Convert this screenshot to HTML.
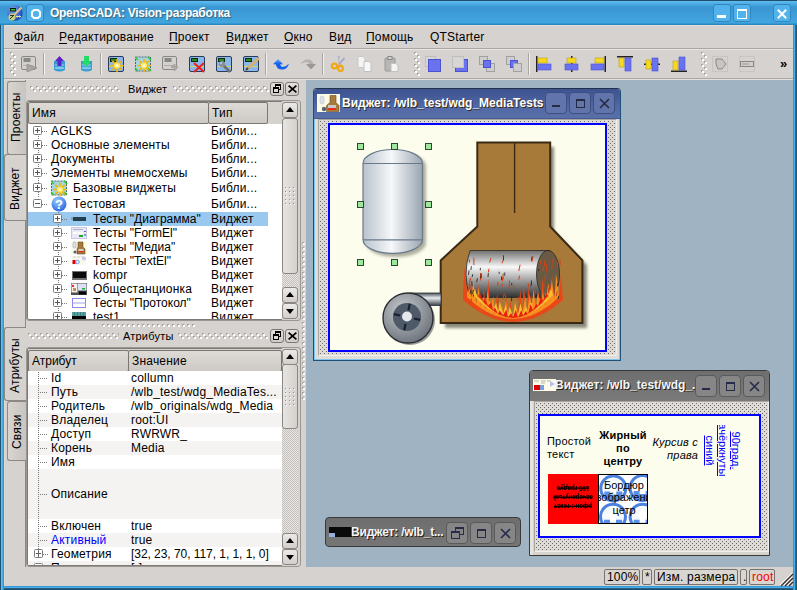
<!DOCTYPE html>
<html><head><meta charset="utf-8">
<style>
*{box-sizing:border-box;margin:0;padding:0}
html,body{width:797px;height:590px;overflow:hidden;background:#d6d2ce;font-family:"Liberation Sans",sans-serif;font-size:12px;color:#000;position:relative;letter-spacing:0.2px}
.a{position:absolute}
.nw{white-space:nowrap}
svg{position:absolute;overflow:visible}
#win{position:absolute;left:0;top:0;width:797px;height:590px;background:linear-gradient(90deg,#1e5270 0 1px,#5ebcf6 1px 2px,#48ace4 2px 3px,#3a96cc 3px 4px,transparent 4px 793px,#3a98d8 793px 794px,#48aee8 794px 795px,#2a6a90 795px 796px,#225a7a 796px),linear-gradient(#3ea6e6 0 586px,#3a98d8 586px 587px,#48aef0 587px 588px,#285e80 588px 589px,#1e4e6a 589px)}
#title{position:absolute;left:0;top:0;width:797px;height:25px;background:linear-gradient(#1e4e6a 0,#1e4e6a 1px,#5ebdf5 1px,#3a96d0 7px,#3d9ad6 12px,#41a6e0 23px,#2a8ac0 24px,#2a8ac0 25px)}
#content{position:absolute;left:4px;top:25px;width:789px;height:561px;background:#d6d2cf;border-top:1px solid #e4dcd8;border-left:1px solid #e0d6d2}
.tb{position:absolute;top:4px;width:19px;height:18px;border-radius:3px;background:#52b3ec;border:1px solid #3186bd}
.menu{position:absolute;top:30px;white-space:nowrap}
.menu u{text-decoration:none;position:relative}.menu u:after{content:"";position:absolute;left:0;right:0;top:13px;height:1px;background:#000}
.sep{position:absolute;top:53px;width:2px;height:22px;border-left:1px solid #a8a4a0;border-right:1px solid #f4f2f0}
.hdl{position:absolute;width:6px;background-image:conic-gradient(from 270deg at 2px 2px,#fff 90deg,transparent 0),conic-gradient(from 270deg at 2px 2px,#fff 90deg,transparent 0),conic-gradient(from 270deg at 2px 2px,#a8a4a0 90deg,transparent 0),conic-gradient(from 270deg at 2px 2px,#a8a4a0 90deg,transparent 0);background-size:6px 6px;background-position:1px 1px,4px 4px,0 0,3px 3px}
#mdi{position:absolute;left:306px;top:80px;width:487px;height:487px;background:#9fb3c3}
.sb{position:absolute;top:569px;height:16px;border:1px solid #76726e;border-radius:2px;line-height:14px;padding-left:2px;white-space:nowrap;background:#d9d5d1}

.dots{position:absolute;height:6px;background-image:conic-gradient(from 270deg at 2px 2px,#fff 90deg,transparent 0),conic-gradient(from 270deg at 2px 2px,#fff 90deg,transparent 0),conic-gradient(from 270deg at 2px 2px,#a8a4a0 90deg,transparent 0),conic-gradient(from 270deg at 2px 2px,#a8a4a0 90deg,transparent 0);background-size:6px 6px;background-position:1px 1px,4px 4px,0 0,3px 3px}
.hdots{position:absolute;height:3px;background-image:conic-gradient(from 270deg at 2px 2px,#fff 90deg,transparent 0),conic-gradient(from 270deg at 2px 2px,#a8a4a0 90deg,transparent 0);background-size:5px 5px;background-position:1px 1px,0 0}
.vdots{position:absolute;width:3px;background-image:conic-gradient(from 270deg at 2px 2px,#fff 90deg,transparent 0),conic-gradient(from 270deg at 2px 2px,#a8a4a0 90deg,transparent 0);background-size:5px 5px;background-position:1px 1px,0 0}
.dbtn{position:absolute;width:14px;height:14px;border:1px solid #7c7874;border-radius:3px;background:linear-gradient(#e2dfdc,#d0ccc8)}
.frame{position:absolute;border:1px solid #9a9692;border-radius:3px;background:#d6d2ce}
.frame2{position:absolute;border:1px solid #7e7a76;border-radius:2px;background:#fff;overflow:hidden}
.hd{position:absolute;top:0;height:22px;border:1px solid #7a7672;border-radius:2px;background:linear-gradient(#dedad6,#cdc9c5);line-height:20px;padding-left:3px;white-space:nowrap}
.row{position:absolute;height:14px;line-height:14px;white-space:nowrap}
.pb{position:absolute;width:9px;height:9px;border:1px solid #7c7c7c;border-radius:1.5px;background:#fff}
.pb:before{content:"";position:absolute;left:1px;top:3px;width:5px;height:1px;background:#555}
.pb.p:after{content:"";position:absolute;left:3px;top:1px;width:1px;height:5px;background:#555}
.vl{position:absolute;width:1px;background:repeating-linear-gradient(#7a7a7a 0 1px,transparent 1px 2px)}
.hl{position:absolute;height:1px;background:repeating-linear-gradient(90deg,#7a7a7a 0 1px,transparent 1px 2px)}
.sbar{position:absolute;width:16px;background:conic-gradient(#c4c0bc 25%,#e8e6e4 0 50%,#c4c0bc 0 75%,#e8e6e4 0);background-size:2px 2px}
.sbtn{position:absolute;left:0;width:16px;height:16px;border:1px solid #8a8682;border-radius:3px;background:linear-gradient(#eceae8,#d2cecb)}
.sbtn.up:after{content:"";position:absolute;left:3px;top:4px;border-left:4px solid transparent;border-right:4px solid transparent;border-bottom:5px solid #000}
.sbtn.dn:after{content:"";position:absolute;left:3px;top:5px;border-left:4px solid transparent;border-right:4px solid transparent;border-top:5px solid #000}
.slider{position:absolute;left:0;width:16px;border:1px solid #8a8682;border-radius:3px;background:linear-gradient(90deg,#e6e4e2,#d4d0cc)}
.grip{position:absolute;left:2px;width:10px;height:18px;background-image:conic-gradient(from 270deg at 1px 1px,#fff 90deg,transparent 0),conic-gradient(from 270deg at 1px 1px,#98948f 90deg,transparent 0);background-size:4px 4px;background-position:1px 1px,0 0}
.vtab{position:absolute;border:1px solid #8c8884;border-right:none;border-radius:3px 0 0 3px;background:linear-gradient(90deg,#d8d4d0,#c8c4c0)}
.vtab span{position:absolute;white-space:nowrap;transform:rotate(-90deg);transform-origin:0 0}

.mw{position:absolute;border:1px solid #28344e;border-radius:4px 4px 0 0;overflow:hidden}
.mwt{position:absolute;left:0;top:0;right:0}
.mbtn{position:absolute;width:22px;height:22px;border:1px solid #3a4a78;border-radius:4px;background:#6678ad}
.pat{position:absolute;background-color:#dedad6;background-image:conic-gradient(from 270deg at 1px 1px,#6e6a68 90deg,transparent 0),conic-gradient(from 270deg at 1px 1px,#6e6a68 90deg,transparent 0);background-size:4px 4px;background-position:1px 1px,3px 3px;border:1px solid #a8a4a0;border-right-color:#f0eeec;border-bottom-color:#f0eeec}
.hnd{position:absolute;width:7px;height:7px;background:#9ce89c;border:1px solid #2a4a2a}
</style></head><body>
<div id="win"></div>
<div id="title"></div>
<!-- title bar -->
<svg style="left:7px;top:5px" width="17" height="16" viewBox="0 0 17 16"><defs><radialGradient id="ag" cx=".35" cy=".3" r=".75"><stop offset="0" stop-color="#7aa8f0"/><stop offset="1" stop-color="#1a40b0"/></radialGradient></defs>
<circle cx="8" cy="8" r="7.7" fill="url(#ag)"/>
<rect x="3" y="3" width="6" height="3.5" fill="#111"/><rect x="3.8" y="4" width="4.4" height="1.5" fill="#2c2"/>
<line x1="7" y1="10" x2="14.5" y2="2.5" stroke="#e8c090" stroke-width="1.8"/>
<circle cx="5" cy="12" r="3.6" fill="#c0d080"/><path d="M3 14L7 10M3 10.5h4" stroke="#223" stroke-width=".9"/>
<path d="M9 11.5h5M10 10.5v2M12.5 10.5v2" stroke="#e0e0a0" stroke-width="1"/>
</svg>
<div class="tb" style="left:26px;width:18px"><svg style="left:3.5px;top:3.5px" width="10" height="10"><path d="M3 1H7L9 3V7L7 9H3L1 7V3Z" fill="none" stroke="#fff" stroke-width="2"/></svg></div>
<div class="a nw" style="left:50px;top:6px;font-weight:bold;color:#fff;letter-spacing:-0.27px;text-shadow:1px 1px 1px rgba(60,40,20,.5)">OpenSCADA: Vision-разработка</div>
<div class="tb" style="left:713px;width:18px"><div class="a" style="left:3px;top:10px;width:9px;height:3px;background:#fff"></div></div>
<div class="tb" style="left:733px;width:18px"><div class="a" style="left:3px;top:4px;width:10px;height:10px;border:1px solid #fff;border-top-width:2px"></div></div>
<div class="tb" style="left:773px;width:18px"><svg style="left:3px;top:4px" width="10" height="10"><path d="M0.8 0.8L9.2 9.2M9.2 0.8L0.8 9.2" stroke="#fff" stroke-width="2"/></svg></div>
<div id="content"></div>
<!-- menu -->
<div class="menu" style="left:14px"><u>Ф</u>айл</div>
<div class="menu" style="left:59px"><u>Р</u>едактирование</div>
<div class="menu" style="left:169px"><u>П</u>роект</div>
<div class="menu" style="left:226px"><u>В</u>иджет</div>
<div class="menu" style="left:284px"><u>О</u>кно</div>
<div class="menu" style="left:329px">В<u>и</u>д</div>
<div class="menu" style="left:366px"><u>П</u>омощь</div>
<div class="menu" style="left:430px">QTStarter</div>
<div class="a" style="left:4px;top:48px;width:789px;height:1px;background:#aaa6a2"></div>
<div class="a" style="left:4px;top:49px;width:789px;height:1px;background:#e8e6e4"></div>
<div class="a" style="left:4px;top:78px;width:789px;height:1px;background:#aaa6a2"></div><div class="a" style="left:4px;top:79px;width:789px;height:1px;background:#e4e0dc"></div>
<!-- toolbar -->
<div class="hdl" style="left:10px;top:52px;height:24px"></div>
<div class="sep" style="left:43px"></div>
<div class="sep" style="left:100px"></div>
<div class="sep" style="left:265px"></div>
<div class="sep" style="left:322px"></div>
<div class="hdl" style="left:414px;top:52px;height:24px"></div>
<div class="sep" style="left:528px"></div>
<div class="hdl" style="left:701px;top:52px;height:24px"></div>
<div class="a" style="left:780px;top:56px;font-weight:bold;font-size:13px">»</div>
<svg style="left:21px;top:56px" width="16" height="16" viewBox="0 0 16 16"><rect x="0.5" y="0.5" width="14" height="13" rx="1.5" fill="#d4d0cc" stroke="#8a8886"/><rect x="2.5" y="2" width="7" height="4" fill="#888"/><rect x="2" y="9" width="10" height="1" fill="#b0aeac"/><path d="M6 8L16 12L6 16Z" fill="#a8a6a4" stroke="#8a8886" stroke-width=".6"/></svg>
<svg style="left:53px;top:56px" width="16" height="16" viewBox="0 0 16 16"><path d="M1 5 h11 v9 q-5.5 3 -11 0Z" fill="#3a9ad0"/><ellipse cx="6.5" cy="12" rx="5" ry="1.3" fill="#7cc8ec"/><ellipse cx="6.5" cy="9" rx="5" ry="1.3" fill="#6ab8e0"/><path d="M6.5 0L11 5H8.5V10H4.5V5H2Z" fill="#5a22cc"/></svg>
<svg style="left:80px;top:56px" width="16" height="16" viewBox="0 0 16 16"><path d="M1 5 h11 v9 q-5.5 3 -11 0Z" fill="#3a9ad0"/><ellipse cx="6.5" cy="12" rx="5" ry="1.3" fill="#7cc8ec"/><ellipse cx="6.5" cy="9" rx="5" ry="1.3" fill="#6ab8e0"/><path d="M6.5 10.5L11 5.5H9V0H4V5.5H1.5Z" fill="#22dd66"/></svg>
<svg style="left:108px;top:56px" width="16" height="16" viewBox="0 0 16 16"><rect x="0.5" y="0.5" width="15" height="15" rx="1.5" fill="#8ab8ec" stroke="#2a3a58"/><rect x="2" y="2" width="7" height="4" fill="#0a2a0a"/><rect x="3" y="3" width="5" height="2" fill="#2a8a2a"/><rect x="1" y="10" width="14" height="1" fill="#d8d860"/><g stroke="#f4b400" stroke-width="1.7" stroke-linecap="round"><path d="M9 3.5V15.5M3 9.5H15M4.8 5.3L13.2 13.7M13.2 5.3L4.8 13.7"/></g><circle cx="9" cy="9.5" r="3" fill="#ffe860"/><circle cx="9" cy="9.5" r="1.6" fill="#fffbd0"/></svg>
<svg style="left:135px;top:56px" width="16" height="16" viewBox="0 0 16 16"><rect x="0.5" y="1" width="15" height="14" fill="#a8d4dc" stroke="#4a6a70" stroke-dasharray="2 1"/><path d="M0 1l3 3M13 1l3 3M0 12l3 3M13 12l3 3" stroke="#22cc22" stroke-width="1.2"/><g stroke="#f4b400" stroke-width="1.7" stroke-linecap="round"><path d="M9 3.5V15.5M3 9.5H15M4.8 5.3L13.2 13.7M13.2 5.3L4.8 13.7"/></g><circle cx="9" cy="9.5" r="3" fill="#ffe860"/><circle cx="9" cy="9.5" r="1.6" fill="#fffbd0"/></svg>
<svg style="left:162px;top:56px" width="16" height="16" viewBox="0 0 16 16"><rect x="0.5" y="0.5" width="14" height="13" rx="1.5" fill="#d4d0cc" stroke="#8a8886"/><rect x="2.5" y="2" width="7" height="4" fill="#888"/><rect x="2" y="9" width="10" height="1" fill="#b0aeac"/><path d="M9 11h7M12.5 8v7" stroke="#a8a6a4" stroke-width="2"/></svg>
<svg style="left:189px;top:56px" width="16" height="16" viewBox="0 0 16 16"><rect x="0.5" y="0.5" width="15" height="15" rx="1.5" fill="#8ab8ec" stroke="#2a3a58"/><rect x="2" y="2" width="7" height="4" fill="#0a2a0a"/><rect x="3" y="3" width="5" height="2" fill="#2a8a2a"/><rect x="1" y="10" width="14" height="1" fill="#d8d860"/><path d="M5 7L15 16M15 7L5 16" stroke="#e82020" stroke-width="2"/></svg>
<svg style="left:216px;top:56px" width="16" height="16" viewBox="0 0 16 16"><rect x="0.5" y="0.5" width="15" height="15" rx="1.5" fill="#8ab8ec" stroke="#2a3a58"/><rect x="2" y="2" width="7" height="4" fill="#0a2a0a"/><rect x="3" y="3" width="5" height="2" fill="#2a8a2a"/><rect x="1" y="10" width="14" height="1" fill="#d8d860"/><path d="M6 8L14 16" stroke="#707070" stroke-width="3"/><circle cx="6" cy="8" r="3" fill="#909090"/><circle cx="5" cy="7" r="1.2" fill="#9ec6f2"/></svg>
<svg style="left:243px;top:56px" width="16" height="16" viewBox="0 0 16 16"><rect x="0.5" y="0.5" width="15" height="15" rx="1.5" fill="#8ab8ec" stroke="#2a3a58"/><rect x="2" y="2" width="7" height="4" fill="#0a2a0a"/><rect x="3" y="3" width="5" height="2" fill="#2a8a2a"/><rect x="1" y="10" width="14" height="1" fill="#d8d860"/><path d="M4 13L16 2" stroke="#d8b070" stroke-width="3"/><path d="M3 14L5 12" stroke="#444" stroke-width="2"/></svg>
<svg style="left:273px;top:56px" width="16" height="16" viewBox="0 0 16 16"><defs><linearGradient id="ug" x1="0" y1="0" x2="0" y2="1"><stop offset="0" stop-color="#78b0ff"/><stop offset="1" stop-color="#0a5ae8"/></linearGradient></defs><path d="M0 8.2L5 3L10 8.2Z" fill="url(#ug)"/><path d="M2.8 8 Q3.5 14 10 13.5 Q14.5 13 16 7.5 Q13 11 10 11 Q7.5 11 7.2 8Z" fill="#1060f0"/></svg>
<svg style="left:300px;top:56px" width="16" height="16" viewBox="0 0 16 16"><path d="M0 9 Q3 3 9 3.5 Q12.5 4 13.5 8.2 L9.5 8.2 Q8.5 6 5.5 6 Q2.5 6.5 0 9Z" fill="#b4b2b0"/><path d="M6 8L16 8L11 13.5Z" fill="#9a9896"/></svg>
<svg style="left:331px;top:56px" width="16" height="16" viewBox="0 0 16 16"><path d="M7.8 0.7L8.6 8M13 2.4L8.4 8" stroke="#a8a8c0" stroke-width="1.8" stroke-linecap="round"/><path d="M8 1.5L8.5 6" stroke="#e8e8f0" stroke-width=".7"/><ellipse cx="3.4" cy="10" rx="2.6" ry="2.4" fill="none" stroke="#f0a818" stroke-width="2.2"/><ellipse cx="9.5" cy="12.4" rx="2.3" ry="2.7" fill="none" stroke="#f0a818" stroke-width="2.2"/></svg>
<svg style="left:357px;top:56px" width="16" height="16" viewBox="0 0 16 16"><path d="M1 0.5h5l2 2v9H1Z" fill="#f4f4f4" stroke="#c8c8c8"/><path d="M7 5.5h5l2 2v8H7Z" fill="#f8f8f8" stroke="#c0c0c0"/></svg>
<svg style="left:384px;top:56px" width="16" height="16" viewBox="0 0 16 16"><rect x="1" y="2" width="10" height="13" rx="1" fill="#b8b6b4" stroke="#9a9896"/><rect x="4" y="0.5" width="4" height="3" fill="#d8d6d4" stroke="#8a8886"/><path d="M7 7.5h5l2 2v6H7Z" fill="#f4f4f4" stroke="#c0c0c0"/></svg>
<svg style="left:425px;top:56px" width="16" height="16" viewBox="0 0 16 16"><rect x="0.5" y="0.5" width="10" height="10" fill="#d8d6d4" stroke="#c0bebc"/><rect x="3.5" y="3.5" width="12" height="12" fill="#6a72f0" stroke="#4a52d0"/></svg>
<svg style="left:452px;top:56px" width="16" height="16" viewBox="0 0 16 16"><rect x="3.5" y="3.5" width="12" height="12" fill="#6a72f0" stroke="#4a52d0"/><rect x="0.5" y="0.5" width="11" height="11" fill="#d8d6d4" stroke="#c0bebc"/></svg>
<svg style="left:479px;top:56px" width="16" height="16" viewBox="0 0 16 16"><rect x="0.5" y="0.5" width="8" height="8" fill="#d0cecc" stroke="#a0a0a0"/><rect x="7.5" y="7.5" width="8" height="8" fill="#d0cecc" stroke="#a0a0a0"/><rect x="4.5" y="4.5" width="7" height="7" fill="#6a72f0" stroke="#4a52d0"/></svg>
<svg style="left:506px;top:56px" width="16" height="16" viewBox="0 0 16 16"><rect x="0.5" y="0.5" width="8" height="8" fill="#d0cecc" stroke="#a0a0a0"/><rect x="4.5" y="4.5" width="7" height="7" fill="#6a72f0" stroke="#4a52d0"/><rect x="7.5" y="7.5" width="8" height="8" fill="#d0cecc" stroke="#a0a0a0"/></svg>
<svg style="left:536px;top:56px" width="16" height="16" viewBox="0 0 16 16"><rect x="0" y="0" width="1.5" height="16" fill="#222"/><rect x="2" y="2" width="9" height="5" fill="#f8d820" stroke="#b8a010" stroke-width=".6"/><rect x="2" y="8" width="13" height="6" fill="#6a72f0" stroke="#4a52d0" stroke-width=".6"/></svg>
<svg style="left:564px;top:56px" width="16" height="16" viewBox="0 0 16 16"><rect x="7" y="0" width="1.5" height="16" fill="#222"/><rect x="3" y="2" width="9" height="5" fill="#f8d820" stroke="#b8a010" stroke-width=".6"/><rect x="1" y="8" width="13" height="6" fill="#6a72f0" stroke="#4a52d0" stroke-width=".6"/></svg>
<svg style="left:590px;top:56px" width="16" height="16" viewBox="0 0 16 16"><rect x="14.5" y="0" width="1.5" height="16" fill="#222"/><rect x="5" y="2" width="9" height="5" fill="#f8d820" stroke="#b8a010" stroke-width=".6"/><rect x="1" y="8" width="13" height="6" fill="#6a72f0" stroke="#4a52d0" stroke-width=".6"/></svg>
<svg style="left:617px;top:56px" width="16" height="16" viewBox="0 0 16 16"><rect x="0" y="0" width="16" height="1.5" fill="#222"/><rect x="2" y="2" width="5" height="9" fill="#f8d820" stroke="#b8a010" stroke-width=".6"/><rect x="8" y="2" width="6" height="13" fill="#6a72f0" stroke="#4a52d0" stroke-width=".6"/></svg>
<svg style="left:644px;top:56px" width="16" height="16" viewBox="0 0 16 16"><rect x="0" y="7.5" width="16" height="1.5" fill="#222"/><rect x="2" y="4" width="5" height="9" fill="#f8d820" stroke="#b8a010" stroke-width=".6"/><rect x="8" y="2" width="6" height="13" fill="#6a72f0" stroke="#4a52d0" stroke-width=".6"/></svg>
<svg style="left:671px;top:56px" width="16" height="16" viewBox="0 0 16 16"><rect x="0" y="14.5" width="16" height="1.5" fill="#222"/><rect x="2" y="5" width="5" height="9" fill="#f8d820" stroke="#b8a010" stroke-width=".6"/><rect x="8" y="1" width="6" height="13" fill="#6a72f0" stroke="#4a52d0" stroke-width=".6"/></svg>
<svg style="left:712px;top:56px" width="16" height="16" viewBox="0 0 16 16"><rect x="0.5" y="0.5" width="15" height="15" fill="none" stroke="#b8b6b4" stroke-dasharray="1 1"/><path d="M4 3 L10 3 L14 8 L10 13 L6 13 Q3 8 4 3Z" fill="#c8c6c4" stroke="#8a8886"/></svg>
<svg style="left:739px;top:56px" width="16" height="16" viewBox="0 0 16 16"><rect x="0.5" y="0.5" width="15" height="15" fill="none" stroke="#b8b6b4" stroke-dasharray="1 1"/><rect x="1.5" y="5.5" width="13" height="5" fill="#d0cecc" stroke="#8a8886"/><path d="M3 8h7" stroke="#9a9896"/></svg>

<div class="a" style="left:25px;top:80px;width:1px;height:487px;background:#8c8884"></div>
<div class="vtab" style="left:7px;top:81px;width:19px;height:74px"><span style="left:1px;top:60px">Проекты</span></div>
<div class="vtab" style="left:4px;top:154px;width:22px;height:67px;background:#d6d2ce;border-color:#8c8884"><span style="left:3px;top:55px">Виджет</span></div>
<div class="vtab" style="left:4px;top:327px;width:22px;height:74px;background:#d6d2ce"><span style="left:3px;top:65px">Атрибуты</span></div>
<div class="vtab" style="left:7px;top:401px;width:19px;height:60px"><span style="left:2px;top:47px">Связи</span></div>
<div class="dots" style="left:30px;top:86px;width:90px"></div>
<div class="a nw" style="left:128px;top:83px;font-size:11px">Виджет</div>
<div class="dots" style="left:173px;top:86px;width:96px"></div>
<div class="dbtn" style="left:270px;top:82px"><div class="a" style="left:4px;top:1px;width:6px;height:6px;border:1px solid #000;border-top-width:2px"></div><div class="a" style="left:2px;top:4px;width:6px;height:6px;border:1px solid #000;border-top-width:2px;background:#dedad6"></div></div><div class="dbtn" style="left:285px;top:82px"><svg style="left:2px;top:2px" width="9" height="8"><path d="M0.6 0.6L8.4 7.4M8.4 0.6L0.6 7.4" stroke="#000" stroke-width="1.7"/></svg></div>
<div class="frame" style="left:26px;top:100px;width:275px;height:221px"></div>
<div class="frame2" style="left:27px;top:101px;width:256px;height:219px"><div class="a" style="left:0;top:0;width:256px;height:22px;background:#d6d2ce"></div><div class="hd" style="left:0;width:181px">Имя</div><div class="hd" style="left:180px;width:60px">Тип</div></div>
<div class="a" style="left:28px;top:124px;width:254px;height:195px;overflow:hidden">
<div class="a" style="left:0;top:88px;width:240px;height:14px;background:#99c9ef"></div>
<div class="vl" style="left:10px;top:2px;height:72px"></div>
<div class="vl" style="left:30px;top:88px;height:200px"></div>
<div class="hl" style="left:14px;top:7px;width:5px"></div>
<div class="pb p" style="left:5px;top:2px"></div>
<div class="row" style="left:23px;top:0px">AGLKS</div>
<div class="row" style="left:183px;top:0px">Библи...</div>
<div class="hl" style="left:14px;top:21px;width:5px"></div>
<div class="pb p" style="left:5px;top:16px"></div>
<div class="row" style="left:23px;top:14px">Основные элементы</div>
<div class="row" style="left:183px;top:14px">Библи...</div>
<div class="hl" style="left:14px;top:35px;width:5px"></div>
<div class="pb p" style="left:5px;top:30px"></div>
<div class="row" style="left:23px;top:28px">Документы</div>
<div class="row" style="left:183px;top:28px">Библи...</div>
<div class="hl" style="left:14px;top:49px;width:5px"></div>
<div class="pb p" style="left:5px;top:44px"></div>
<div class="row" style="left:23px;top:42px">Элементы мнемосхемы</div>
<div class="row" style="left:183px;top:42px">Библи...</div>
<div class="hl" style="left:14px;top:64px;width:5px"></div>
<div class="pb p" style="left:5px;top:59px"></div>
<svg style="left:23px;top:56px" width="16" height="16"><rect x="0.5" y="1" width="15" height="14" fill="#a8d4dc" stroke="#4a6a70" stroke-dasharray="2 1"/><path d="M0 1l3 3M13 1l3 3M0 12l3 3M13 12l3 3" stroke="#22cc22" stroke-width="1.2"/><g stroke="#f4b400" stroke-width="1.7" stroke-linecap="round"><path d="M9 3.5V15.5M3 9.5H15M4.8 5.3L13.2 13.7M13.2 5.3L4.8 13.7"/></g><circle cx="9" cy="9.5" r="3" fill="#ffe860"/><circle cx="9" cy="9.5" r="1.6" fill="#fffbd0"/></svg>
<div class="row" style="left:45px;top:57px">Базовые виджеты</div>
<div class="row" style="left:183px;top:57px">Библи...</div>
<div class="hl" style="left:14px;top:80px;width:5px"></div>
<div class="pb " style="left:5px;top:75px"></div>
<svg style="left:23px;top:72px" width="16" height="16"><defs><radialGradient id="qg" cx="40%" cy="30%" r="70%"><stop offset="0" stop-color="#9cd0ff"/><stop offset="1" stop-color="#2a6ae0"/></radialGradient></defs><circle cx="8" cy="8" r="7.5" fill="url(#qg)"/><text x="8" y="12.5" text-anchor="middle" font-family="Liberation Sans" font-weight="bold" font-size="13" fill="#fff">?</text></svg>
<div class="row" style="left:45px;top:73px">Тестовая</div>
<div class="row" style="left:183px;top:73px">Библи...</div>
<div class="hl" style="left:34px;top:95px;width:5px"></div>
<div class="pb p" style="left:25px;top:90px"></div>
<div class="a" style="left:45px;top:93px;width:13px;height:4px;background:#23404c"></div><div class="a" style="left:43px;top:93px;width:2px;height:3px;background:#8aa"></div>
<div class="row" style="left:65px;top:88px;letter-spacing:0">Тесты "Диаграмма"</div>
<div class="row" style="left:183px;top:88px">Виджет</div>
<div class="hl" style="left:34px;top:109px;width:5px"></div>
<div class="pb p" style="left:25px;top:104px"></div>
<svg style="left:43px;top:103px" width="16" height="12"><rect x=".5" y=".5" width="15" height="11" fill="#e8e8f8" stroke="#c8c8e0"/><rect x="2" y="2" width="10" height="1" fill="#b0b0c8"/><rect x="2" y="5" width="4" height="2" fill="#fff"/><rect x="7" y="5" width="5" height="2" fill="#fff"/><rect x="13" y="4" width="2" height="1" fill="#6060d0"/><rect x="8" y="8" width="4" height="2" fill="#22aa22"/><rect x="13" y="7" width="2" height="2" fill="#7a9ae8"/></svg>
<div class="row" style="left:65px;top:102px;letter-spacing:0">Тесты "FormEl"</div>
<div class="row" style="left:183px;top:102px">Виджет</div>
<div class="hl" style="left:34px;top:123px;width:5px"></div>
<div class="pb p" style="left:25px;top:118px"></div>
<svg style="left:43px;top:117px" width="16" height="13"><rect width="16" height="13" fill="#fbfbe8"/><rect x="2" y="1" width="3" height="6" rx="1.2" fill="#dfe4ea" stroke="#9aa4b0" stroke-width=".6"/><path d="M7 1h5v5l2 2v5H6V8l1-2Z" fill="#a87a3a" stroke="#5a3a18" stroke-width=".5"/><rect x="7.5" y="8" width="5" height="2" fill="#d0d0d0"/><rect x="7.5" y="10" width="5" height="1.2" fill="#e03010"/><circle cx="4" cy="11" r="1.6" fill="#5a6470"/></svg>
<div class="row" style="left:65px;top:116px;letter-spacing:0">Тесты "Медиа"</div>
<div class="row" style="left:183px;top:116px">Виджет</div>
<div class="hl" style="left:34px;top:137px;width:5px"></div>
<div class="pb p" style="left:25px;top:132px"></div>
<svg style="left:44px;top:132px" width="14" height="9"><rect width="14" height="9" fill="#f8f8ec"/><path d="M1 1h3M5 1h3M9 1h3" stroke="#bbb" stroke-width=".6"/><rect x="0.5" y="4" width="3" height="4" fill="#dd0000"/><circle cx="5.5" cy="6" r="1.7" fill="#fff" stroke="#4a78d8" stroke-width=".8"/><path d="M10 1.5l2-1 2 1v2l-2 1-2-1Z" fill="#c8c8f8"/></svg>
<div class="row" style="left:65px;top:130px;letter-spacing:0">Тесты "TextEl"</div>
<div class="row" style="left:183px;top:130px">Виджет</div>
<div class="hl" style="left:34px;top:151px;width:5px"></div>
<div class="pb p" style="left:25px;top:146px"></div>
<div class="a" style="left:44px;top:147px;width:15px;height:9px;background:#0a0a0a;border:1px solid #707070;border-bottom-width:2px"></div>
<div class="row" style="left:65px;top:144px">kompr</div>
<div class="row" style="left:183px;top:144px">Виджет</div>
<div class="hl" style="left:34px;top:165px;width:5px"></div>
<div class="pb p" style="left:25px;top:160px"></div>
<svg style="left:43px;top:159px" width="16" height="12"><rect width="16" height="12" fill="#505050"/><rect x="0.5" y=".5" width="6" height="9" fill="#f0f0f0"/><rect x="1" y="2" width="2" height="2" fill="#e03030"/><rect x="2" y="5" width="3" height="3" fill="#c89050"/><rect x="7" y=".5" width="8.5" height="7" fill="#e0e0f4"/><rect x="11" y="5" width="3" height="1.5" fill="#22aa44"/><rect x="8" y="8.5" width="7" height="3" fill="#000"/></svg>
<div class="row" style="left:65px;top:158px">Общестанционка</div>
<div class="row" style="left:183px;top:158px">Виджет</div>
<div class="hl" style="left:34px;top:179px;width:5px"></div>
<div class="pb p" style="left:25px;top:174px"></div>
<svg style="left:44px;top:174px" width="14" height="10"><rect x=".5" y=".5" width="13" height="9" fill="#fff" stroke="#8888f0"/><path d="M.5 5h13" stroke="#a0a0f0"/></svg>
<div class="row" style="left:65px;top:172px;letter-spacing:0">Тесты "Протокол"</div>
<div class="row" style="left:183px;top:172px">Виджет</div>
<div class="hl" style="left:34px;top:193px;width:5px"></div>
<div class="pb p" style="left:25px;top:188px"></div>
<div class="a" style="left:44px;top:188px;width:14px;height:10px;background:#000"></div><div class="a" style="left:44px;top:188px;width:14px;height:4px;background:repeating-linear-gradient(90deg,#5aa0a0 0 2px,#3a8080 2px 3px)"></div>
<div class="row" style="left:65px;top:186px">test1</div>
<div class="row" style="left:183px;top:186px">Виджет</div>
</div>
<div class="sbar" style="left:282px;top:102px;height:217px"><div class="sbtn up" style="top:0"></div><div class="slider" style="top:16px;height:156px"><div class="grip" style="top:68px"></div></div><div class="sbtn up" style="top:185px"></div><div class="sbtn dn" style="top:201px"></div></div>
<div class="hdots" style="left:102px;top:324px;width:93px"></div>
<div class="vdots" style="left:302px;top:242px;height:158px"></div>
<div class="dots" style="left:28px;top:333px;width:91px"></div>
<div class="a nw" style="left:123px;top:330px;font-size:11px">Атрибуты</div>
<div class="dots" style="left:178px;top:333px;width:90px"></div>
<div class="dbtn" style="left:270px;top:329px"><div class="a" style="left:4px;top:1px;width:6px;height:6px;border:1px solid #000;border-top-width:2px"></div><div class="a" style="left:2px;top:4px;width:6px;height:6px;border:1px solid #000;border-top-width:2px;background:#dedad6"></div></div><div class="dbtn" style="left:285px;top:329px"><svg style="left:2px;top:2px" width="9" height="8"><path d="M0.6 0.6L8.4 7.4M8.4 0.6L0.6 7.4" stroke="#000" stroke-width="1.7"/></svg></div>
<div class="frame" style="left:26px;top:347px;width:275px;height:220px"></div>
<div class="frame2" style="left:27px;top:348px;width:256px;height:218px">
<div class="a" style="left:0;top:0;width:256px;height:22px;background:#d6d2ce"></div>
<div class="hd" style="left:0;width:101px;top:1px;height:22px;letter-spacing:0">Атрибут</div>
<div class="vl" style="left:10px;top:23px;height:186px;z-index:1"></div>
<div class="hd" style="left:100px;width:154px;top:1px;height:22px">Значение</div>
<div class="a" style="left:0;top:22px;width:256px;height:14px;background:#ffffff"></div>
<div class="hl" style="left:12px;top:29px;width:8px"></div>
<div class="row" style="left:23px;top:22px;color:#000">Id</div>
<div class="row" style="left:103px;top:22px">collumn</div>
<div class="a" style="left:0;top:36px;width:256px;height:14px;background:#f5f3f1"></div>
<div class="hl" style="left:12px;top:43px;width:8px"></div>
<div class="row" style="left:23px;top:36px;color:#000">Путь</div>
<div class="row" style="left:103px;top:36px">/wlb_test/wdg_MediaTes...</div>
<div class="a" style="left:0;top:50px;width:256px;height:14px;background:#ffffff"></div>
<div class="hl" style="left:12px;top:57px;width:8px"></div>
<div class="row" style="left:23px;top:50px;color:#000">Родитель</div>
<div class="row" style="left:103px;top:50px">/wlb_originals/wdg_Media</div>
<div class="a" style="left:0;top:64px;width:256px;height:14px;background:#f5f3f1"></div>
<div class="hl" style="left:12px;top:71px;width:8px"></div>
<div class="row" style="left:23px;top:64px;color:#000">Владелец</div>
<div class="row" style="left:103px;top:64px">root:UI</div>
<div class="a" style="left:0;top:78px;width:256px;height:14px;background:#ffffff"></div>
<div class="hl" style="left:12px;top:85px;width:8px"></div>
<div class="row" style="left:23px;top:78px;color:#000">Доступ</div>
<div class="row" style="left:103px;top:78px">RWRWR_</div>
<div class="a" style="left:0;top:92px;width:256px;height:14px;background:#f5f3f1"></div>
<div class="hl" style="left:12px;top:99px;width:8px"></div>
<div class="row" style="left:23px;top:92px;color:#000">Корень</div>
<div class="row" style="left:103px;top:92px">Media</div>
<div class="a" style="left:0;top:106px;width:256px;height:14px;background:#ffffff"></div>
<div class="hl" style="left:12px;top:113px;width:8px"></div>
<div class="row" style="left:23px;top:106px;color:#000">Имя</div>
<div class="a" style="left:0;top:120px;width:256px;height:50px;background:#f5f3f1"></div>
<div class="hl" style="left:12px;top:145px;width:8px"></div>
<div class="row" style="left:23px;top:138px;color:#000">Описание</div>
<div class="a" style="left:0;top:170px;width:256px;height:14px;background:#ffffff"></div>
<div class="hl" style="left:12px;top:177px;width:8px"></div>
<div class="row" style="left:23px;top:170px;color:#000">Включен</div>
<div class="row" style="left:103px;top:170px">true</div>
<div class="a" style="left:0;top:184px;width:256px;height:14px;background:#f5f3f1"></div>
<div class="hl" style="left:12px;top:191px;width:8px"></div>
<div class="row" style="left:23px;top:184px;color:#0000ff">Активный</div>
<div class="row" style="left:103px;top:184px">true</div>
<div class="a" style="left:0;top:198px;width:256px;height:14px;background:#ffffff"></div>
<div class="hl" style="left:15px;top:205px;width:5px"></div>
<div class="pb p" style="left:6px;top:200px"></div>
<div class="row" style="left:23px;top:198px;color:#000">Геометрия</div>
<div class="row" style="left:103px;top:198px;letter-spacing:-0.05px">[32, 23, 70, 117, 1, 1, 1, 0]</div>
<div class="a" style="left:0;top:212px;width:256px;height:14px;background:#f5f3f1"></div>
<div class="hl" style="left:15px;top:219px;width:5px"></div>
<div class="pb p" style="left:6px;top:214px"></div>
<div class="row" style="left:23px;top:212px;color:#000">Позиция</div>
<div class="row" style="left:103px;top:212px">[-]</div>
</div>
<div class="sbar" style="left:282px;top:349px;height:216px"><div class="sbtn up" style="top:0"></div><div class="slider" style="top:15px;height:65px"><div class="grip" style="top:23px"></div></div><div class="sbtn up" style="top:184px"></div><div class="sbtn dn" style="top:200px"></div></div>
<div id="mdi"></div>
<div class="mw" style="left:313px;top:88px;width:308px;height:273px;background:#e0dcd8;border-color:#233049;border-left-color:#2a4a6a;border-right-color:#1e5078;border-bottom-color:#1e5078">
<div class="mwt" style="height:30px;background:linear-gradient(#3d5290,#5068a4 60%,#5a70aa);border-bottom:1px solid #46598e"></div>
<div class="a" style="left:0;top:30px;width:1px;height:241px;background:#7ec4ec"></div><div class="a" style="left:305px;top:30px;width:1px;height:241px;background:#7ec4ec"></div><div class="a" style="left:0;top:270px;width:306px;height:1px;background:#7ec4ec"></div>
<svg style="left:3px;top:5px" width="23" height="18" viewBox="0 0 23 18"><rect width="23" height="18" fill="#fbfbe8"/><rect x="3" y="2" width="4" height="8" rx="2" fill="#dde2ea" stroke="#b0b8c4" stroke-width=".5"/><path d="M13 1.5h6v7l3 3v6H9.5v-6l3.5-3Z" fill="#a87a3a" stroke="#6a4a20" stroke-width=".6"/><rect x="11" y="11" width="8" height="3" fill="#c8c8c8"/><rect x="11" y="14" width="8" height="2" fill="#e83020"/><circle cx="7" cy="15" r="2.2" fill="#5a6470"/></svg>
<div class="a nw" style="left:28px;top:7px;font-weight:bold;color:#fff;letter-spacing:0;text-shadow:1px 1px 0 #3a2a10">Виджет: /wlb_test/wdg_MediaTests</div>
<div class="mbtn" style="left:231px;top:3px;background:#6274ac;border-color:#3d4f80"><div class="a" style="left:6px;top:12px;width:8px;height:2px;background:#252b40"></div></div><div class="mbtn" style="left:254.5px;top:3px;background:#6274ac;border-color:#3d4f80"><div class="a" style="left:6px;top:6px;width:9px;height:9px;border:1.5px solid #252b40;border-top-width:2px"></div></div><div class="mbtn" style="left:278.5px;top:3px;background:#6274ac;border-color:#3d4f80"><svg style="left:5px;top:5px" width="11" height="11"><path d="M1 1L10 10M10 1L1 10" stroke="#252b40" stroke-width="1.6"/></svg></div>
<div class="pat" style="left:4px;top:30px;width:299px;height:237px;border-radius:0 0 3px 0"></div>
<div class="a" style="left:14px;top:34px;width:279px;height:229px;background:#fdfdee;border:2px solid #0000ff"></div>
<svg style="left:0;top:0" width="306" height="272" viewBox="314 89 306 272">
<defs>
<linearGradient id="vg" x1="0" x2="1"><stop offset="0" stop-color="#b8c2cc"/><stop offset=".48" stop-color="#f6f8fa"/><stop offset="1" stop-color="#9aa4b0"/></linearGradient>
<linearGradient id="cg" x1="0" y1="0" x2="0" y2="1"><stop offset="0" stop-color="#707070"/><stop offset=".35" stop-color="#f8f8f8"/><stop offset="1" stop-color="#303030"/></linearGradient>
<linearGradient id="pg" x1="0" y1="0" x2="0" y2="1"><stop offset="0" stop-color="#4a5058"/><stop offset=".4" stop-color="#e8ecf0"/><stop offset="1" stop-color="#3a4048"/></linearGradient>
<filter id="blur" x="-20%" y="-20%" width="140%" height="140%"><feGaussianBlur stdDeviation="1.8"/></filter><radialGradient id="fg" cx=".4" cy=".35" r=".7"><stop offset="0" stop-color="#c8ccd0"/><stop offset="1" stop-color="#6a7078"/></radialGradient>
</defs>
<!-- vessel shadow -->
<path d="M366 166 A30 14 0 0 1 426 166 V243 A30 14 0 0 1 366 243Z" fill="#505040" opacity=".45" filter="url(#blur)"/>
<path d="M363 163.5 A29.75 14 0 0 1 422.5 163.5 V239.8 A29.75 13.5 0 0 1 363 239.8Z" fill="url(#vg)" stroke="#6a7a8a" stroke-width="1.2"/>
<path d="M363 163.5 H422.5 M363 239.8 H422.5" stroke="#6a7a8a" stroke-width="1.2"/>
<!-- furnace shadow -->
<path d="M481 147 H554 V231 L587 265 V328 H445 V265 L481 231Z" fill="#2a2a20" opacity=".55" filter="url(#blur)"/>
<path d="M477.3 142.5 H550.2 V226.5 L582.4 260.4 V323 H440.7 V260.4 L477.3 226.5Z" fill="#a87a3a" stroke="#3a2a14" stroke-width="2"/>
<path d="M514.6 143 V213" stroke="#3a2a14" stroke-width="1.4"/>
<!-- drum -->
<path d="M470 250.5 H550 V297.5 H470 Q462 274 470 250.5Z" fill="url(#cg)" stroke="#2a2a2a" stroke-width=".8"/>
<ellipse cx="548" cy="274" rx="11.5" ry="23.5" fill="#6a5a44" stroke="#2a2a2a" stroke-width=".8"/>
<path d="M463.0 300.0 L463.0 293.9 L464.6 266.6 L467.5 300.3 L469.4 277.4 L472.1 301.6 L474.6 289.0 L476.6 304.3 L478.1 283.7 L481.2 313.1 L483.9 286.8 L485.7 313.8 L488.4 277.9 L490.3 317.2 L493.3 300.0 L494.8 312.3 L497.2 293.4 L499.4 317.3 L501.1 302.1 L503.9 318.1 L505.7 292.6 L508.5 320.2 L510.2 299.1 L513.0 319.9 L515.2 303.5 L517.5 317.8 L520.4 289.4 L522.1 314.1 L523.8 284.1 L526.6 318.0 L528.2 286.1 L531.2 312.3 L533.8 290.9 L535.7 312.6 L538.6 291.6 L540.3 309.1 L542.7 277.6 L544.8 308.9 L547.1 293.0 L549.4 304.6 L551.2 282.1 L553.9 303.3 L555.6 272.6 L558.5 301.1 L561.0 274.0 L563.0 300.0 L563.0 300.0 L553.0 307.9 L543.0 314.1 L533.0 318.5 L523.0 321.1 L513.0 322.0 L503.0 321.1 L493.0 318.5 L483.0 314.1 L473.0 307.9 L463.0 300.0Z" fill="#e84818"/>
<path d="M467.0 297.0 L467.0 293.2 L470.1 289.0 L471.6 297.8 L473.1 280.7 L476.2 303.7 L478.8 287.2 L480.8 305.9 L483.3 297.3 L485.4 309.5 L487.6 290.7 L490.0 309.7 L493.2 296.2 L494.6 314.4 L496.8 305.7 L499.2 315.2 L500.6 302.3 L503.8 314.6 L505.9 300.1 L508.4 317.8 L510.8 308.6 L513.0 318.5 L515.0 300.8 L517.6 316.1 L520.8 305.5 L522.2 314.9 L525.2 295.7 L526.8 314.0 L529.8 293.4 L531.4 311.6 L533.4 289.3 L536.0 310.5 L537.7 291.2 L540.6 309.0 L542.8 291.9 L545.2 306.2 L548.3 282.8 L549.8 301.4 L551.8 278.9 L554.4 298.9 L556.6 274.5 L559.0 297.0 L559.0 297.0 L549.8 304.9 L540.6 311.1 L531.4 315.5 L522.2 318.1 L513.0 319.0 L503.8 318.1 L494.6 315.5 L485.4 311.1 L476.2 304.9 L467.0 297.0Z" fill="#f89020"/>
<path d="M473.0 295.0 L473.0 293.9 L475.0 288.8 L478.0 298.9 L480.7 297.1 L483.0 303.0 L484.5 298.5 L488.0 306.4 L490.0 300.5 L493.0 310.5 L496.2 302.4 L498.0 312.6 L499.8 301.8 L503.0 314.1 L505.5 305.2 L508.0 315.1 L509.6 306.5 L513.0 316.9 L515.1 304.1 L518.0 315.2 L520.4 303.3 L523.0 313.8 L525.9 306.1 L528.0 313.0 L531.1 299.1 L533.0 311.3 L536.3 303.3 L538.0 306.5 L539.9 298.1 L543.0 304.0 L545.8 292.7 L548.0 299.5 L550.3 287.6 L553.0 295.0 L553.0 295.0 L545.0 302.9 L537.0 309.1 L529.0 313.5 L521.0 316.1 L513.0 317.0 L505.0 316.1 L497.0 313.5 L489.0 309.1 L481.0 302.9 L473.0 295.0Z" fill="#f8c030"/>
<path d="M478.0 296.0 L478.0 295.9 L480.0 293.0 L483.0 301.8 L484.8 298.3 L488.0 305.8 L491.3 302.0 L493.0 310.2 L494.9 307.5 L498.0 313.8 L499.8 310.6 L503.0 315.2 L506.4 309.4 L508.0 317.3 L511.1 313.1 L513.0 317.1 L515.8 309.7 L518.0 317.4 L521.3 310.1 L523.0 315.6 L525.8 311.0 L528.0 313.9 L530.4 303.9 L533.0 310.2 L536.2 303.5 L538.0 306.1 L541.3 295.3 L543.0 301.2 L546.2 292.7 L548.0 296.0 L548.0 296.0 L541.0 303.9 L534.0 310.1 L527.0 314.5 L520.0 317.1 L513.0 318.0 L506.0 317.1 L499.0 314.5 L492.0 310.1 L485.0 303.9 L478.0 296.0Z" fill="#e82010"/>
<path d="M509.6 280.6l-0.6 7.6 M546.7 264.4l-0.2 7.0 M541.0 260.1l-0.4 4.5 M549.9 283.9l0.4 6.0 M528.2 283.1l0.2 3.8 M473.8 257.6l0.1 7.4 M498.0 282.0l-0.2 4.0 M514.0 285.1l-0.7 5.3 M518.7 297.0l-0.9 3.4 M489.1 268.7l-0.7 3.4 M545.9 273.0l-1.1 7.8 M553.3 258.3l-0.7 4.9 M520.1 264.7l-1.3 6.4 M498.6 298.4l-1.2 6.8 M533.0 256.5l-1.1 5.3 M519.5 275.7l-0.7 4.0 M503.3 273.4l-1.0 8.0 M557.3 291.4l-1.1 4.5 M504.3 293.6l-1.4 6.2 M481.5 275.4l0.2 3.0 M503.5 259.3l-1.5 4.0 M501.9 283.4l0.2 3.6 M480.5 273.0l0.3 6.1 M543.2 267.0l-0.1 3.9 M503.7 277.2l-1.3 3.4 M471.6 298.4l-1.0 4.2 M543.8 282.2l0.4 4.5 M557.9 261.6l-0.9 5.4 M552.4 265.0l-0.7 3.1 M490.9 258.1l-1.3 4.4 M480.7 275.8l-0.3 4.7 M553.0 276.9l0.4 4.8 M470.0 284.0l-0.9 5.4 M559.9 259.3l0.3 5.7 M535.8 287.0l-0.8 7.0 M531.0 295.6l0.4 7.4 M470.8 278.0l-0.7 3.1 M469.1 259.2l0.5 3.5 M548.9 288.0l-0.6 4.9 M545.1 259.7l-0.9 6.8" stroke="#d84010" stroke-width="1" fill="none"/><path d="M511.7 282.9l-0.0 2.4 M469.0 270.5l-0.6 4.4 M531.5 280.5l-0.2 4.0 M481.4 273.4l-0.8 4.7 M473.4 290.0l-0.9 4.1 M499.0 271.8l0.3 2.1 M473.6 294.3l-0.2 2.3 M558.8 295.7l-0.8 3.3 M480.4 267.8l-0.1 2.5 M532.1 256.3l-0.7 4.4 M504.8 272.4l-0.1 3.4 M503.4 255.3l0.1 4.9 M557.8 283.2l-0.5 3.1 M531.5 283.6l-0.8 2.7 M501.4 276.5l0.2 3.5 M470.6 290.2l-0.4 3.6 M488.4 272.8l-0.4 4.3 M477.4 278.2l-0.7 4.1 M471.4 266.2l-0.5 3.9 M472.8 274.2l-0.7 2.8 M511.8 296.2l-0.3 4.9 M483.4 294.7l-0.5 2.6 M536.9 294.1l-1.0 2.8 M538.9 269.0l-0.6 2.0 M471.7 281.2l0.5 5.0" stroke="#1a1a1a" stroke-width=".8" fill="none"/>
<!-- pipe -->
<rect x="410" y="293" width="31" height="12.5" fill="url(#pg)" stroke="#2a3038" stroke-width=".8"/>
<!-- fan -->
<circle cx="410" cy="320" r="25" fill="#3a3e44" opacity=".5"/>
<circle cx="408" cy="318" r="25" fill="url(#fg)" stroke="#2a2e34" stroke-width="1.4"/>
<circle cx="407" cy="317" r="14" fill="#4e5a68"/>
<g stroke="#1a2030" stroke-width="2.2" transform="rotate(12 407 317)"><path d="M407 303.5V310M407 324V330.5M393.5 317H400M414 317H420.5"/></g>
<circle cx="407" cy="316.5" r="5" fill="#e4e8ec"/>
</svg>
<div class="hnd" style="left:43px;top:54px"></div>
<div class="hnd" style="left:43px;top:112px"></div>
<div class="hnd" style="left:43px;top:170px"></div>
<div class="hnd" style="left:77px;top:54px"></div>
<div class="hnd" style="left:77px;top:170px"></div>
<div class="hnd" style="left:111px;top:54px"></div>
<div class="hnd" style="left:111px;top:112px"></div>
<div class="hnd" style="left:111px;top:170px"></div>
</div>
<div class="mw" style="left:529px;top:370px;width:241px;height:186px;background:#d6d2ce;border-color:#3a3a3a">
<div class="mwt" style="height:30px;background:linear-gradient(#6e6e6e,#747474 50%,#7a7a7a)"></div>
<div class="a" style="left:0;top:30px;width:3px;height:156px;background:#e6e2de"></div>
<svg style="left:3px;top:8px" width="23" height="12" viewBox="0 0 23 12"><rect width="23" height="12" fill="#fbfbe8"/><path d="M1 2h5M8 2h5M14 2h4M8 4h4" stroke="#888" stroke-width=".6"/><rect x="1" y="6" width="6" height="5" fill="#d00"/><rect x="7" y="6" width="4" height="5" fill="#7aa0d8"/><path d="M17 2 l5 3 -5 3z" fill="#b8c0f0"/></svg>
<div class="a nw" style="left:25px;top:7px;width:148px;overflow:hidden;font-weight:bold;color:#f4f4f4;letter-spacing:0;text-shadow:1px 1px 0 #2a2010">Виджет: /wlb_test/wdg_.</div>
<div class="mbtn" style="left:165px;top:4px;background:#868686;border-color:#5a5a5a"><div class="a" style="left:6px;top:12px;width:8px;height:2px;background:#252b48"></div></div><div class="mbtn" style="left:189px;top:4px;background:#868686;border-color:#5a5a5a"><div class="a" style="left:6px;top:6px;width:9px;height:9px;border:1.5px solid #252b48;border-top-width:2px"></div></div><div class="mbtn" style="left:213px;top:4px;background:#868686;border-color:#5a5a5a"><svg style="left:5px;top:5px" width="11" height="11"><path d="M1 1L10 10M10 1L1 10" stroke="#252b48" stroke-width="1.6"/></svg></div>
<div class="pat" style="left:4px;top:30px;width:235px;height:151px"></div>
<div class="a" style="left:8px;top:43px;width:223px;height:124px;background:#fdfdee;border:2px solid #0000ff"></div>
<div class="a nw" style="left:17px;top:64px;font-size:11px;letter-spacing:0.2px;line-height:13px;">Простой<br>текст</div>
<div class="a" style="left:66px;top:58px;width:54px;text-align:center;font-size:11px;font-weight:bold;letter-spacing:0.2px;line-height:13px">Жирный<br>по<br>центру</div>
<div class="a" style="left:110px;top:65px;width:58px;text-align:right;font-size:11px;font-style:italic;letter-spacing:0.2px;line-height:13px">Курсив с<br>права</div>
<div class="a" style="left:169px;top:54px;width:42px;height:51px;overflow:hidden"><div class="a" style="left:42px;top:0;width:51px;transform:rotate(90deg);transform-origin:0 0;text-align:center;font-size:11px;letter-spacing:0;line-height:13px;color:#0000ff;text-decoration:underline;white-space:nowrap"><div style="margin-left:-10px;margin-right:-10px;margin-top:-1px">90град.<br>зачёркнутый<br>синий</div></div></div>
<div class="a" style="left:18px;top:103px;width:50px;height:50px;background:#ff0000"></div>
<div class="a" style="left:18px;top:117px;width:50px;height:21px;transform:rotate(180deg) scaleY(1.3);text-align:center;font-size:6.2px;line-height:7px;letter-spacing:0;text-decoration:line-through;font-weight:bold;color:#000">рфон : текст<br>зачеркнутый<br>100 градус</div>
<div class="a" style="left:68px;top:103px;width:50px;height:50px;border:1px solid #000;background:#fff;overflow:hidden"><svg style="left:-1px;top:-1px" width="50" height="50" viewBox="0 0 50 50"><defs><g id="bi"><circle r="12.5" fill="#f4f8ff" stroke="#4a80e0" stroke-width="3"/><path d="M-9 3h18v6q-9 5 -18 0z" fill="#5a90e8"/><path d="M0 -8l7 8h-4v6h-6v-6h-4z" fill="#fff"/><path d="M-8 -6q8 -8 16 0" stroke="#fff" stroke-width="1.5" fill="none" opacity=".8"/></g></defs><use href="#bi" x="15.3" y="14.4"/><use href="#bi" x="44.6" y="14"/><use href="#bi" x="15" y="42.7"/><use href="#bi" x="44.6" y="42.7"/></svg><div class="a" style="left:-20px;top:3.5px;width:90px;text-align:center;font-size:11px;line-height:12.6px;letter-spacing:0">Бордюр<br>изображение<br>цетр</div></div>
</div>
<div class="a" style="left:325px;top:517px;width:196px;height:30px;border:1px solid #3a3a3a;border-radius:4px;background:linear-gradient(#6e6e6e,#767676)">
<div class="a" style="left:3px;top:9px;width:23px;height:10px;background:#0a0a0a"></div><div class="a" style="left:3px;top:15px;width:6px;height:4px;background:#9ad"></div>
<div class="a nw" style="left:25px;top:7px;font-weight:bold;color:#f4f4f4;letter-spacing:-0.2px;text-shadow:1px 1px 0 #2a2010">Виджет: /wlb_t...</div>
<div class="mbtn" style="left:120px;top:3.5px;background:#868686;border-color:#5a5a5a"><div class="a" style="left:8px;top:4px;width:9px;height:8px;border:1.5px solid #252b48;border-top-width:2px"></div><div class="a" style="left:4px;top:8px;width:9px;height:8px;border:1.5px solid #252b48;border-top-width:2px;background:#868686"></div></div><div class="mbtn" style="left:144px;top:3.5px;background:#868686;border-color:#5a5a5a"><div class="a" style="left:6px;top:6px;width:9px;height:9px;border:1.5px solid #252b48;border-top-width:2px"></div></div><div class="mbtn" style="left:168px;top:3.5px;background:#868686;border-color:#5a5a5a"><svg style="left:5px;top:5px" width="11" height="11"><path d="M1 1L10 10M10 1L1 10" stroke="#252b48" stroke-width="1.6"/></svg></div>
</div>
<div class="sb" style="left:604px;width:36px">100%</div>
<div class="sb" style="left:642px;width:10px">*</div>
<div class="sb" style="left:654px;width:84px">Изм. размера</div>
<div class="sb" style="left:740px;width:7px">.</div>
<div class="sb" style="left:749px;width:26px;color:#f00">root</div>
<svg style="left:779px;top:572px" width="14" height="14" viewBox="0 0 14 14"><path d="M13 1L1 13M13 5L5 13M13 9L9 13" stroke="#fff" stroke-width="1"/><path d="M14 2L2 14M14 6L6 14M14 10L10 14" stroke="#3a3430" stroke-width="1.4"/></svg>
</body></html>
